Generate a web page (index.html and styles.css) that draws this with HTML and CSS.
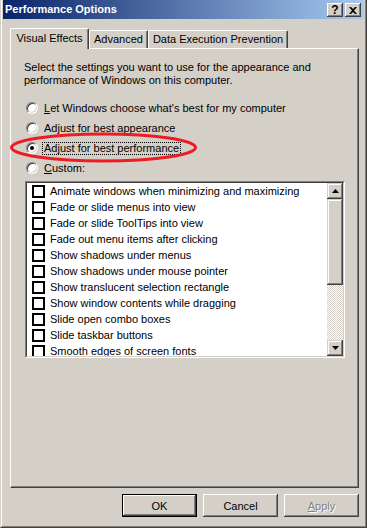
FILE: index.html
```html
<!DOCTYPE html>
<html lang="en">
<head>
  <meta charset="UTF-8" />
  <title>Performance Options</title>
  <link rel="stylesheet" href="styles.css">
</head>
<body>
  <div class="window">
    <div class="frame">
      <div class="titlebar">
        <span class="title">Performance Options</span>
        <div class="caption-btns">
          <span class="cap-btn help">?</span>
          <span class="cap-btn">
            <svg width="8" height="7" viewBox="0 0 8 7"><path d="M0 0h2l2 2 2-2h2L5 3.5 8 7H6L4 5 2 7H0l3-3.5z" fill="#000"/></svg>
          </span>
        </div>
      </div>

      <div class="tabs">
        <div class="tab active">Visual Effects</div>
        <div class="tab tab-adv">Advanced</div>
        <div class="tab tab-dep">Data Execution Prevention</div>
      </div>

      <div class="panel">
        <p class="intro">Select the settings you want to use for the appearance and<br>performance of Windows on this computer.</p>

        <div class="radios">
          <div class="radio-row"><span class="radio"></span><span class="label"><u>L</u>et Windows choose what's best for my computer</span></div>
          <div class="radio-row"><span class="radio"></span><span class="label">Adjust for best appearance</span></div>
          <div class="radio-row"><span class="radio checked"></span><span class="label focus">Adjust for best performance</span></div>
          <div class="radio-row"><span class="radio"></span><span class="label"><u>C</u>ustom:</span></div>
        </div>

        <div class="listbox">
          <div class="listbox-inner">
            <ul class="items">
              <li><span class="check"></span>Animate windows when minimizing and maximizing</li>
              <li><span class="check"></span>Fade or slide menus into view</li>
              <li><span class="check"></span>Fade or slide ToolTips into view</li>
              <li><span class="check"></span>Fade out menu items after clicking</li>
              <li><span class="check"></span>Show shadows under menus</li>
              <li><span class="check"></span>Show shadows under mouse pointer</li>
              <li><span class="check"></span>Show translucent selection rectangle</li>
              <li><span class="check"></span>Show window contents while dragging</li>
              <li><span class="check"></span>Slide open combo boxes</li>
              <li><span class="check"></span>Slide taskbar buttons</li>
              <li><span class="check"></span>Smooth edges of screen fonts</li>
            </ul>
            <div class="scrollbar">
              <div class="sb-btn">
                <svg width="7" height="4" viewBox="0 0 7 4"><path d="M3.5 0L7 4H0z" fill="#000"/></svg>
              </div>
              <div class="sb-thumb"></div>
              <div class="sb-track"></div>
              <div class="sb-btn">
                <svg width="7" height="4" viewBox="0 0 7 4"><path d="M0 0h7L3.5 4z" fill="#000"/></svg>
              </div>
            </div>
          </div>
        </div>
      </div>

      <div class="actions">
        <button class="btn default">OK</button>
        <button class="btn">Cancel</button>
        <button class="btn disabled"><u>A</u>pply</button>
      </div>
    </div>
  </div>

  <svg class="markup" width="367" height="528" viewBox="0 0 367 528">
    <ellipse cx="103.5" cy="147.5" rx="92" ry="13.5" fill="none" stroke="#ec1c24" stroke-width="3"/>
  </svg>
</body>
</html>
```

FILE: styles.css
```css
:root {
  --face: #d4d0c8;
  --shadow: #808080;
  --dark: #404040;
  --light: #fff;
}
* { box-sizing: border-box; }
body {
  margin: 0;
  position: relative;
  background: var(--face);
  font-family: "Liberation Sans", Arial, sans-serif;
  font-size: 11px;
  color: #000;
}
.window {
  width: 367px;
  height: 528px;
  background: var(--face);
  border-left: 1px solid var(--face);
  border-right: 1px solid var(--dark);
  border-bottom: 1px solid var(--dark);
}
.frame {
  height: 100%;
  padding: 0 1px;
  border-left: 1px solid var(--light);
  border-right: 1px solid var(--shadow);
  border-bottom: 1px solid var(--shadow);
}

/* title bar */
.titlebar {
  height: 19px;
  display: flex;
  justify-content: space-between;
  align-items: flex-start;
  padding: 0 3px 0 2px;
  background: linear-gradient(to right, #0a246a, #a6caf0);
}
.title { color: #fff; font-weight: bold; line-height: 19px; }
.caption-btns { display: flex; gap: 2px; margin-top: 3px; }
.cap-btn {
  width: 16px; height: 14px;
  display: flex; align-items: center; justify-content: center;
  background: var(--face);
  box-shadow: inset -1px -1px var(--dark), inset 1px 1px var(--light), inset -2px -2px var(--shadow), inset 2px 2px var(--face);
}
.cap-btn.help { font-weight: bold; font-size: 12px; line-height: 14px; padding-bottom: 1px; }

/* tabs */
.tabs {
  display: flex;
  align-items: flex-end;
  height: 21px;
  margin: 9px 0 -1px 7px;
  position: relative;
  z-index: 1;
}
.tab {
  height: 18px;
  margin-bottom: 1px;
  text-align: center;
  line-height: 17px;
  background: var(--face);
  border-top: 1px solid var(--light);
  border-left: 1px solid var(--light);
  border-right: 1px solid var(--dark);
  border-radius: 2px 2px 0 0;
  box-shadow: inset -1px 0 var(--shadow);
}
.tab.active { width: 79px; height: 21px; margin-bottom: 0; line-height: 19px; }
.tab-adv { width: 59px; }
.tab-dep { width: 140px; }

/* panel */
.panel {
  width: 349px;
  height: 440px;
  margin-left: 7px;
  padding: 12px 0 0 13px;
  border-top: 1px solid var(--light);
  border-left: 1px solid var(--light);
  border-right: 1px solid var(--dark);
  border-bottom: 1px solid var(--dark);
  box-shadow: inset -1px -1px var(--shadow);
}
.intro { margin: 0; line-height: 13px; }
.radios { margin: 11px 0 0 2px; }
.radio-row { height: 20px; display: flex; align-items: center; }
.radio {
  width: 12px; height: 12px;
  margin-right: 4px;
  border-radius: 50%;
  background: #fff;
  border: 1px solid;
  border-color: var(--shadow) var(--light) var(--light) var(--shadow);
  box-shadow: inset 1px 1px var(--dark), inset -1px -1px var(--face);
  position: relative;
}
.radio.checked::after {
  content: "";
  position: absolute;
  left: 3px; top: 3px;
  width: 4px; height: 4px;
  border-radius: 50%;
  background: #000;
}
.label {
  padding: 0 1px;
  height: 13px;
  line-height: 11px;
  border: 1px solid transparent;
}
.label.focus { border: 1px dotted #000; }

/* list */
.listbox {
  width: 320px;
  height: 177px;
  margin: 3px 0 0 1px;
  border: 1px solid;
  border-color: var(--shadow) var(--light) var(--light) var(--shadow);
}
.listbox-inner {
  height: 100%;
  display: flex;
  border: 1px solid;
  border-color: var(--dark) var(--face) var(--face) var(--dark);
}
.items {
  flex: 1;
  margin: 0;
  padding: 0;
  list-style: none;
  background: #fff;
  overflow: hidden;
}
.items li {
  height: 16px;
  display: flex;
  align-items: center;
  padding-left: 5px;
  white-space: nowrap;
}
.check {
  width: 13px; height: 13px;
  margin-right: 5px;
  flex: none;
  border: 2px solid #000;
  background: #fff;
}
.scrollbar { width: 16px; display: flex; flex-direction: column; }
.sb-btn, .sb-thumb {
  background: var(--face);
  box-shadow: inset -1px -1px var(--dark), inset 1px 1px var(--face), inset -2px -2px var(--shadow), inset 2px 2px var(--light);
}
.sb-btn { height: 16px; display: flex; align-items: center; justify-content: center; }
.sb-btn svg { display: block; }
.sb-thumb { height: 86px; }
.sb-track {
  flex: 1;
  background-image: conic-gradient(#fff 25%, var(--face) 0 50%, #fff 0 75%, var(--face) 0);
  background-size: 2px 2px;
}

/* buttons */
.actions {
  width: 349px;
  margin: 6px 0 0 7px;
  display: flex;
  justify-content: flex-end;
  gap: 6px;
}
.btn {
  width: 75px; height: 23px;
  padding: 0;
  font: inherit;
  color: #000;
  background: var(--face);
  border: none;
  box-shadow: inset -1px -1px var(--dark), inset 1px 1px var(--light), inset -2px -2px var(--shadow), inset 2px 2px var(--face);
}
.btn.default {
  border: 1px solid #000;
  box-shadow: inset -1px -1px var(--dark), inset 1px 1px var(--light), inset -2px -2px var(--shadow), inset 2px 2px var(--face);
}
.btn.disabled { color: var(--shadow); text-shadow: 1px 1px #fff; }

.markup { position: absolute; left: 0; top: 0; pointer-events: none; }
```
